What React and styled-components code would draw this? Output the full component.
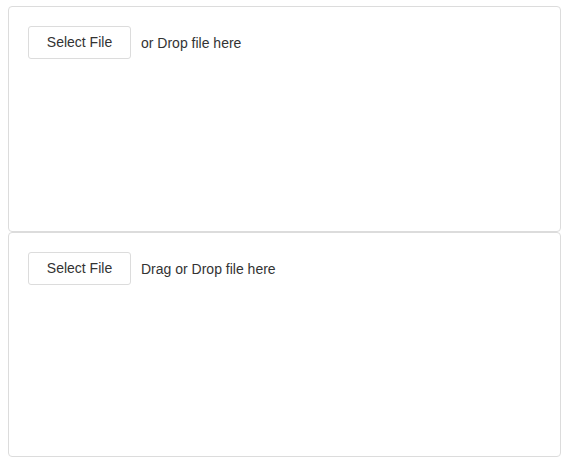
import styled, { createGlobalStyle } from 'styled-components';

const GlobalStyle = createGlobalStyle`
  body {
    margin: 0;
    background: #fff;
    font-family: "Liberation Sans", Arial, sans-serif;
    color: #333;
  }
`;

const Page = styled.div`
  padding: 6px 9px 0 8px;
  display: flex;
  flex-direction: column;
`;

const DropZone = styled.div`
  box-sizing: border-box;
  width: 553px;
  height: ${(p) => p.$h}px;
  border: 1px solid #dcdcdc;
  border-radius: 4px;
  padding: 19px;
  display: flex;
  align-items: flex-start;
  gap: 10px;
`;

const SelectButton = styled.button`
  box-sizing: border-box;
  width: 103px;
  height: 33px;
  border: 1px solid #dcdcdc;
  border-radius: 3px;
  background: #fff;
  color: #333;
  font-family: inherit;
  font-size: 14px;
  padding: 0 0 2px;
  cursor: pointer;
`;

const Hint = styled.span`
  font-size: 14px;
  line-height: 33px;
  padding-top: 1px;
  color: #333;
`;

const zones = [
  { hint: 'or Drop file here', h: 226 },
  { hint: 'Drag or Drop file here', h: 225 },
];

const App = () => (
  <>
    <GlobalStyle />
    <Page>
      {zones.map((z) => (
        <DropZone key={z.hint} $h={z.h}>
          <SelectButton>Select File</SelectButton>
          <Hint>{z.hint}</Hint>
        </DropZone>
      ))}
    </Page>
  </>
);

export default App;
